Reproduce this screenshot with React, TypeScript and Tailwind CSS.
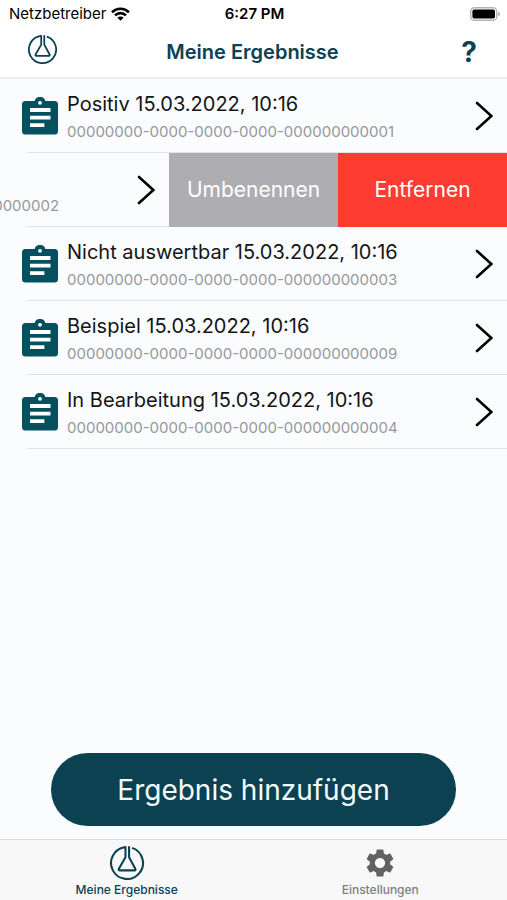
import React from 'react';
import { MdSettings } from 'react-icons/md';

interface Result {
  id: string;
  title?: string;
  swiped?: boolean;
}

const results: Result[] = [
  { id: '00000000-0000-0000-0000-000000000001', title: 'Positiv 15.03.2022, 10:16' },
  { id: '00000000-0000-0000-0000-000000000002', swiped: true },
  { id: '00000000-0000-0000-0000-000000000003', title: 'Nicht auswertbar 15.03.2022, 10:16' },
  { id: '00000000-0000-0000-0000-000000000009', title: 'Beispiel 15.03.2022, 10:16' },
  { id: '00000000-0000-0000-0000-000000000004', title: 'In Bearbeitung 15.03.2022, 10:16' },
];

const FlaskIcon: React.FC<{ className?: string }> = ({ className }) => (
  <svg viewBox="0 0 36 36" fill="none" stroke="currentColor" strokeWidth="2.2" className={className} aria-hidden="true">
    <path d="M16.4 1.2A16.9 16.9 0 1 0 23.4 2" />
    <path d="M16.4 0.2V12L9.4 24.2Q8.6 25.8 10.4 25.8H25.8Q27.6 25.8 26.8 24.2L20.2 12V0.2" strokeLinejoin="round" />
  </svg>
);

const ClipboardIcon = () => (
  <svg viewBox="0 0 36 38" className="h-[38px] w-9 shrink-0 text-[#04505f]" aria-hidden="true">
    <path
      d="M3.5 4H12.6A5.6 5.6 0 0 1 23.4 4H32.5A3.5 3.5 0 0 1 36 7.5V34A3.5 3.5 0 0 1 32.5 37.5H3.5A3.5 3.5 0 0 1 0 34V7.5A3.5 3.5 0 0 1 3.5 4Z"
      fill="currentColor"
    />
    <circle cx="18" cy="5.8" r="1.9" fill="#fff" />
    <path d="M8 13H28.5M8 20.6H28.5M8 28.2H22.4" stroke="#fff" strokeWidth="3.8" />
  </svg>
);

const WifiIcon = () => (
  <svg viewBox="0 0 19 14" fill="none" stroke="currentColor" strokeWidth="2.6" className="h-[14px] w-[19px]" aria-hidden="true">
    <path d="M1 5.2A12.2 12.2 0 0 1 18 5.2" />
    <path d="M4 8.4A7.8 7.8 0 0 1 15 8.4" />
    <path d="M9.5 13.8L6.4 10.7A4.4 4.4 0 0 1 12.6 10.7Z" fill="currentColor" stroke="none" />
  </svg>
);

const BatteryIcon = () => (
  <svg viewBox="0 0 30 14" className="h-[14px] w-[30px]" aria-hidden="true">
    <rect x="0.7" y="0.7" width="26" height="12.6" rx="3.6" fill="#fff" stroke="#b5b5b5" strokeWidth="1.4" />
    <rect x="2.4" y="2.4" width="22.6" height="9.2" rx="1.8" fill="#000" />
    <path d="M28 4.6Q30 5.4 30 7T28 9.4Z" fill="#b5b5b5" />
  </svg>
);

const ChevronIcon = () => (
  <svg viewBox="0 0 18 30" fill="none" stroke="#000" strokeWidth="2.6" strokeLinecap="round" className="h-[30px] w-[18px] shrink-0" aria-hidden="true">
    <path d="M2 2L16.4 15L2 28" />
  </svg>
);

const ResultRow: React.FC<{ result: Result }> = ({ result }) => (
  <li className="flex h-[74px] justify-end overflow-hidden">
    <button type="button" className="flex w-full shrink-0 items-center pr-[14px] pl-[22px] text-left">
      <ClipboardIcon />
      <span className="ml-[9px] flex grow flex-col pt-[3px]">
        <span className="h-7 text-xl leading-7 whitespace-nowrap text-[#151515]">{result.title}</span>
        <span className="text-[15px] leading-7 whitespace-nowrap text-[#97989a]">{result.id}</span>
      </span>
      <ChevronIcon />
    </button>
    {result.swiped && (
      <>
        <button type="button" className="w-1/3 shrink-0 bg-[#aeadb2] text-[21px] text-white">Umbenennen</button>
        <button type="button" className="w-1/3 shrink-0 bg-[#fe3b30] text-[21px] text-white">Entfernen</button>
      </>
    )}
  </li>
);

const App: React.FC = () => (
  <div className="flex min-h-screen flex-col bg-[#fafcfe] font-['Inter','Liberation_Sans',sans-serif]">
    <header className="border-b-2 border-[#ececee] bg-white">
      <div className="grid h-7 grid-cols-3 items-center pr-[7px] pl-[9px] text-[15px] text-black">
        <div className="flex items-center gap-[5px]">
          <span>Netzbetreiber</span>
          <WifiIcon />
        </div>
        <span className="text-center font-semibold">6:27 PM</span>
        <span className="justify-self-end">
          <BatteryIcon />
        </span>
      </div>
      <div className="grid h-[49px] grid-cols-[1fr_auto_1fr] items-center pr-[30px] pb-[2px] pl-7 text-[#0c4152]">
        <FlaskIcon className="mb-[5px] size-[29px]" />
        <h1 className="text-xl font-semibold">Meine Ergebnisse</h1>
        <button type="button" aria-label="Hilfe" className="justify-self-end text-[28px] leading-8 font-bold">?</button>
      </div>
    </header>

    <main className="flex grow flex-col">
      <ul>
        {results.map(result => (
          <React.Fragment key={result.id}>
            <ResultRow result={result} />
            <li aria-hidden="true" className="-mt-px ml-[26px] h-px bg-[#e1e3e5]" />
          </React.Fragment>
        ))}
      </ul>
      <div className="mt-auto px-[51px] pb-[13px]">
        <button type="button" className="h-[73px] w-full rounded-full bg-[#0b4151] text-[28px] text-[#f5fbfd]">
          Ergebnis hinzufügen
        </button>
      </div>
    </main>

    <nav className="grid grid-cols-2 border-t border-[#d9dbdc] bg-[#f8f8f8] text-xs font-medium">
      <a href="#ergebnisse" className="flex h-[60px] flex-col items-center pt-[6px] text-[#0c4152]">
        <FlaskIcon className="size-9" />
        <span className="leading-5">Meine Ergebnisse</span>
      </a>
      <a href="#einstellungen" className="flex h-[60px] flex-col items-center pt-[6px] text-[#7f7f80]">
        <MdSettings size={36} className="text-[#626263]" />
        <span className="leading-5">Einstellungen</span>
      </a>
    </nav>
  </div>
);

export default App;
